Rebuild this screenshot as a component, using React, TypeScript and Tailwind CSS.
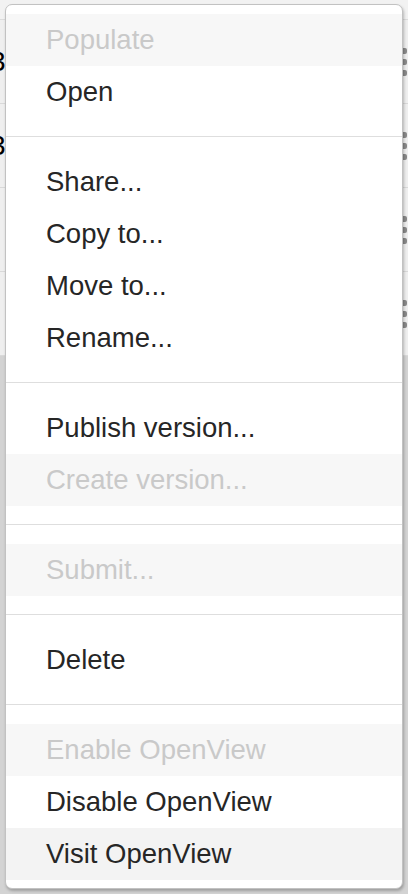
import React from 'react';

type Item = { label: string; disabled?: boolean; highlighted?: boolean };
type Group = Item[];

const groups: Group[] = [
  [{ label: 'Populate', disabled: true }, { label: 'Open' }],
  [{ label: 'Share...' }, { label: 'Copy to...' }, { label: 'Move to...' }, { label: 'Rename...' }],
  [{ label: 'Publish version...' }, { label: 'Create version...', disabled: true }],
  [{ label: 'Submit...', disabled: true }],
  [{ label: 'Delete' }],
  [
    { label: 'Enable OpenView', disabled: true },
    { label: 'Disable OpenView' },
    { label: 'Visit OpenView', highlighted: true },
  ],
];

function Kebab() {
  return (
    <div className="flex flex-col gap-[5px]">
      <span className="block w-[6px] h-[6px] rounded-[2px] bg-[#8a8a8a]" />
      <span className="block w-[6px] h-[6px] rounded-[2px] bg-[#8a8a8a]" />
      <span className="block w-[6px] h-[6px] rounded-[2px] bg-[#8a8a8a]" />
    </div>
  );
}

function BackgroundRow({ showText }: { showText: boolean }) {
  return (
    <div className="h-[84px] flex items-center justify-between border-b border-[#d9d9d9] bg-[#efefef]">
      <span className="text-[28px] text-black -ml-[10px] leading-none">{showText ? '3' : ''}</span>
      <div className="mr-[1px]">
        <Kebab />
      </div>
    </div>
  );
}

function MenuRow({ item }: { item: Item }) {
  const bg = item.disabled ? 'bg-[#f7f7f7]' : item.highlighted ? 'bg-[#f3f3f3]' : 'bg-white';
  const color = item.disabled ? 'text-[#c9c9c9]' : 'text-[#262626]';
  return (
    <div className={`h-[52px] flex items-center pl-[40px] ${bg}`}>
      <span className={`text-[27.5px] leading-none ${color}`}>{item.label}</span>
    </div>
  );
}

export default function App() {
  return (
    <div
      className="relative w-[408px] h-[894px] overflow-hidden bg-[#d3d3d3]"
      style={{ fontFamily: '"Liberation Sans", Arial, sans-serif' }}
    >
      {/* Page behind the menu */}
      <div className="flex flex-col">
        <div className="h-[20px] bg-[#f2f2f2] border-b border-[#dcdcdc]" />
        <BackgroundRow showText />
        <BackgroundRow showText />
        <BackgroundRow showText={false} />
        <BackgroundRow showText={false} />
      </div>

      {/* Context menu */}
      <div className="absolute left-[5px] top-[4px] w-[398px] bg-white border border-[#c2c2c2] rounded-[7px] pt-[9px] pb-[8px] shadow-[1px_2px_3px_rgba(0,0,0,0.25)] overflow-hidden">
        {groups.map((group, gi) => (
          <div key={gi}>
            {gi > 0 && <div className="mt-[18px] mb-[19px] h-px bg-[#dedede]" />}
            {group.map((item) => (
              <MenuRow key={item.label} item={item} />
            ))}
          </div>
        ))}
      </div>
    </div>
  );
}
